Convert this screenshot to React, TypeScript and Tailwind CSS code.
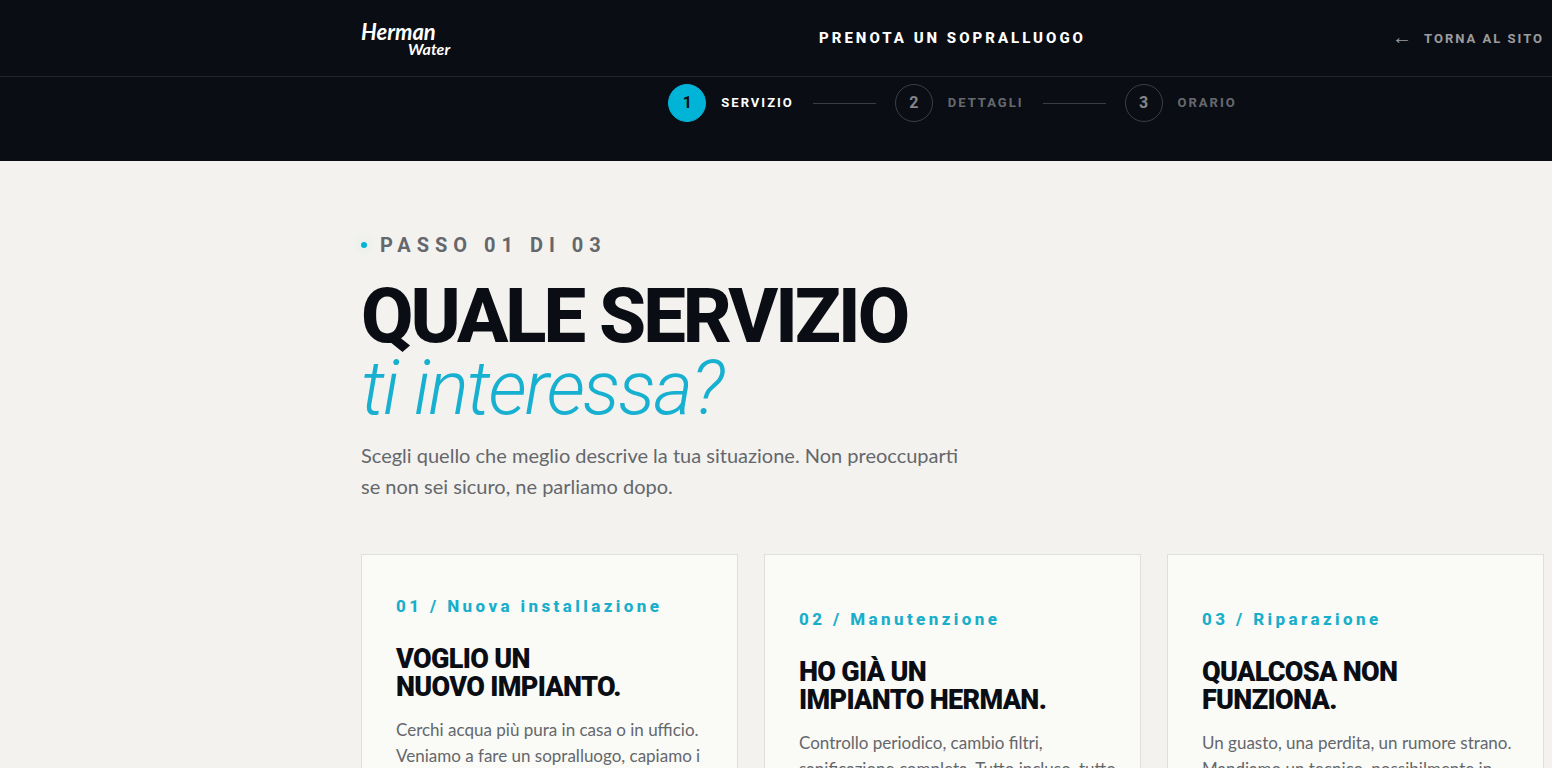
import { Fragment, useState } from 'react';
import clsx from 'clsx';

interface Service {
  id: string;
  label: string;
  title: string[];
  text: string[];
  tall?: boolean;
}

const steps = ['Servizio', 'Dettagli', 'Orario'];

const services: Service[] = [
  {
    id: '01',
    label: 'Nuova installazione',
    title: ['Voglio un', 'nuovo impianto.'],
    text: ['Cerchi acqua più pura in casa o in ufficio.', 'Veniamo a fare un sopralluogo, capiamo i'],
    tall: true,
  },
  {
    id: '02',
    label: 'Manutenzione',
    title: ['Ho già un', 'impianto Herman.'],
    text: ['Controllo periodico, cambio filtri,', 'sanificazione completa. Tutto incluso, tutto'],
  },
  {
    id: '03',
    label: 'Riparazione',
    title: ['Qualcosa non', 'funziona.'],
    text: ['Un guasto, una perdita, un rumore strano.', 'Mandiamo un tecnico, possibilmente in'],
  },
];

function Logo() {
  return (
    <svg
      viewBox="0 0 92 38"
      className="h-[38px] w-[92px] fill-white font-['Lato'] font-bold italic"
      role="img"
      aria-label="Herman Water"
    >
      <text x="0" y="21" fontSize="22">
        Herman
      </text>
      <text x="47" y="36" fontSize="16">
        Water
      </text>
    </svg>
  );
}

function Header() {
  return (
    <header className="border-b border-white/10 pr-2 pl-[361px]">
      <div className="grid h-19 grid-cols-[1fr_auto_1fr] items-center">
        <a href="#">
          <Logo />
        </a>
        <p className="text-[15px] font-extrabold tracking-[3px] text-white uppercase">Prenota un sopralluogo</p>
        <a
          href="#"
          className="flex items-center gap-3 justify-self-end pt-px text-[13px] font-bold tracking-[2px] text-white/60 uppercase"
        >
          <span className="pb-1 text-xl leading-5 font-normal tracking-normal">←</span>
          Torna al sito
        </a>
      </div>
    </header>
  );
}

function Stepper({ current }: { current: number }) {
  return (
    <ol className="flex items-center justify-center gap-[19px] pt-[7px] pr-2 pb-[39px] pl-[361px]">
      {steps.map((step, i) => (
        <Fragment key={step}>
          {i > 0 && <li aria-hidden="true" className="h-px w-[63px] bg-white/20" />}
          <li className="flex items-center gap-[15px]">
            <span
              className={clsx(
                'flex size-[38px] items-center justify-center rounded-full border text-base font-bold',
                i === current ? 'border-[#00b4d8] bg-[#00b4d8] text-[#0a0d14]' : 'border-white/20 text-white/50',
              )}
            >
              {i + 1}
            </span>
            <span
              className={clsx(
                'text-[13px] font-bold tracking-[2px] uppercase',
                i === current ? 'text-white' : 'text-white/40',
              )}
            >
              {step}
            </span>
          </li>
        </Fragment>
      ))}
    </ol>
  );
}

interface ServiceCardProps {
  service: Service;
  onSelect: (id: string) => void;
}

function ServiceCard({ service, onSelect }: ServiceCardProps) {
  return (
    <button
      type="button"
      onClick={() => onSelect(service.id)}
      className="flex flex-col justify-center border border-[#dfdfdc] bg-[#fafaf6] px-[34px] pt-[39px] pb-10 text-left hover:border-[#00b4d8]"
    >
      <span className="text-[17px] leading-6 font-extrabold tracking-[0.2em] text-[#19aecb]">
        {service.id} / {service.label}
      </span>
      <span className="mt-[27px] text-[27px] leading-7 font-black tracking-tight text-[#0a0d14] uppercase">
        {service.title.map((line) => (
          <span key={line} className="block">
            {line}
          </span>
        ))}
      </span>
      <span
        className={clsx(
          "mt-4 font-['Lato'] text-[17px] leading-[26px] text-[#64676c]",
          service.tall && 'min-h-[78px]',
        )}
      >
        {service.text.map((line) => (
          <span key={line} className="block whitespace-nowrap">
            {line}
          </span>
        ))}
      </span>
    </button>
  );
}

export default function App() {
  const [, setSelected] = useState<string | null>(null);

  return (
    <div className="min-h-screen bg-[#f3f2ee] font-['Roboto',sans-serif]">
      <div className="bg-[#0a0d14]">
        <Header />
        <Stepper current={0} />
      </div>

      <main className="pt-[70px] pr-2 pl-[361px]">
        <p className="flex items-center gap-[13px] text-xl leading-7 font-bold tracking-[6px] text-[#64676c] uppercase">
          <span className="size-[6px] rounded-full bg-[#00b4d8] shadow-[0_0_12px_#00b4d840]" />
          Passo 01 di 03
        </p>
        <h1 className="mt-[21px] text-[76px] leading-[72px] tracking-[-3px] text-[#0a0d14]">
          <span className="block font-extrabold uppercase">Quale servizio</span>
          <em className="block font-light tracking-[-2px] text-[#17b0d0]">ti interessa?</em>
        </h1>
        <p className="mt-4 font-['Lato'] text-xl leading-[31px] text-[#64676c]">
          Scegli quello che meglio descrive la tua situazione. Non preoccuparti
          <br />
          se non sei sicuro, ne parliamo dopo.
        </p>

        <div className="mt-[52px] grid grid-cols-3 gap-[26px]">
          {services.map((service) => (
            <ServiceCard key={service.id} service={service} onSelect={setSelected} />
          ))}
        </div>
      </main>
    </div>
  );
}
